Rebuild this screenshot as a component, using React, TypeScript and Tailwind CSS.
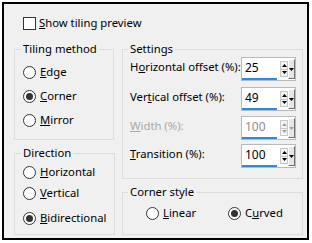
import type { ReactNode } from 'react';

function Radio({ checked }: { checked?: boolean }) {
    return (
        <span className="w-[13px] h-[13px] rounded-full border border-[#333] bg-white flex items-center justify-center shrink-0">
            {checked && <span className="w-[7px] h-[7px] rounded-full bg-[#333]" />}
        </span>
    );
}

function RadioRow({ checked, children, className = '' }: { checked?: boolean; children: ReactNode; className?: string }) {
    return (
        <div className={`flex items-center h-[16px] gap-[4px] ${className}`}>
            <Radio checked={checked} />
            <span className="leading-[16px] whitespace-nowrap">{children}</span>
        </div>
    );
}

function Group({ title, className = '', children }: { title: ReactNode; className?: string; children: ReactNode }) {
    return (
        <fieldset className={`border border-[#dcdcdc] ${className}`}>
            <legend className="leading-[16px] px-[2px] -ml-[2px] whitespace-nowrap">{title}</legend>
            {children}
        </fieldset>
    );
}

function SpinBox({ value, disabled }: { value: string; disabled?: boolean }) {
    const arrow = disabled ? '#a0a0a0' : '#000';
    return (
        <div className="w-[55px] h-[24px] bg-white border border-[#b9b9b9] flex items-stretch shrink-0">
            {/* поле значения */}
            <div className={`w-[35px] flex items-center pl-[3px] text-[12px] border-b-2 border-[#2b8ae6] ${disabled ? 'text-[#8c8c8c]' : ''}`}>
                {value}
            </div>
            <div className="w-[3px]" />
            {/* стрелки вверх/вниз */}
            <div className="w-[8px] my-[3px] flex flex-col border border-[#c8c8c8] bg-[#f4f4f4]">
                <div className="flex-1 flex items-center justify-center border-b border-[#c8c8c8]">
                    <svg width="5" height="3" viewBox="0 0 5 3"><path d="M2.5 0 L5 3 L0 3 Z" fill={arrow} /></svg>
                </div>
                <div className="flex-1 flex items-center justify-center">
                    <svg width="5" height="3" viewBox="0 0 5 3"><path d="M0 0 L5 0 L2.5 3 Z" fill={arrow} /></svg>
                </div>
            </div>
            {/* кнопка списка */}
            <div className="w-[7px] my-[1px] flex items-center justify-center bg-[#e6e6e6] border-t border-l border-white border-r border-b border-r-[#6f6f6f] border-b-[#6f6f6f]">
                <svg width="5" height="3" viewBox="0 0 5 3"><path d="M0 0 L5 0 L2.5 3 Z" fill={arrow} /></svg>
            </div>
        </div>
    );
}

function SpinRow({ label, value, disabled, className = '' }: { label: ReactNode; value: string; disabled?: boolean; className?: string }) {
    return (
        <div className={`flex items-center h-[24px] ${className}`}>
            <span className={`flex-1 leading-[16px] -mt-[4px] whitespace-nowrap ${disabled ? 'text-[#a9a9a9]' : ''}`}>{label}</span>
            <SpinBox value={value} disabled={disabled} />
        </div>
    );
}

export default function App() {
    return (
        <div className="w-[312px] h-[243px] bg-white pt-[2px] pl-[2px] font-['Noto_Sans',sans-serif] text-[11.3px] text-black">
            <div className="w-[307px] h-[238px] border-2 border-black bg-[#f0f0f0] flex flex-col">
                {/* Показ превью */}
                <div className="flex items-center h-[16px] mt-[11px] ml-[19px] gap-[3px]">
                    <span className="w-[13px] h-[13px] border border-[#333] bg-white shrink-0" />
                    <span className="leading-[16px]"><u>S</u>how tiling preview</span>
                </div>

                <div className="flex mt-[10px] ml-[10px] gap-[8px]">
                    {/* Левая колонка */}
                    <div className="w-[100px] flex flex-col">
                        <Group title="Tiling method" className="px-[8px] pt-[7px] pb-[11px]">
                            <RadioRow><u>E</u>dge</RadioRow>
                            <RadioRow checked className="mt-[8px]"><u>C</u>orner</RadioRow>
                            <RadioRow className="mt-[8px]"><u>M</u>irror</RadioRow>
                        </Group>
                        <Group title="Direction" className="mt-[5px] px-[8px] pt-[3px] pb-[8px]">
                            <RadioRow><u>H</u>orizontal</RadioRow>
                            <RadioRow className="mt-[5px]"><u>V</u>ertical</RadioRow>
                            <RadioRow checked className="mt-[9px]"><u>B</u>idirectional</RadioRow>
                        </Group>
                    </div>

                    {/* Правая колонка */}
                    <div className="w-[181px] flex flex-col">
                        <Group title="Settings" className="pl-[7px] pr-[6px] pb-[10px]">
                            <SpinRow label={<>H<u>o</u>rizontal offset (%):</>} value="25" />
                            <SpinRow label={<>Ver<u>t</u>ical offset (%):</>} value="49" className="mt-[6px]" />
                            <SpinRow label={<><u>W</u>idth (%):</>} value="100" disabled className="mt-[5px]" />
                            <SpinRow label={<><u>T</u>ransition (%):</>} value="100" className="mt-[4px]" />
                        </Group>
                        <Group title="Corner style" className="mt-[5px] pl-[7px] pt-[5px] pb-[13px]">
                            <div className="flex">
                                <RadioRow className="ml-[16px] w-[82px]"><u>L</u>inear</RadioRow>
                                <RadioRow checked>C<u>u</u>rved</RadioRow>
                            </div>
                        </Group>
                    </div>
                </div>
            </div>
        </div>
    );
}
